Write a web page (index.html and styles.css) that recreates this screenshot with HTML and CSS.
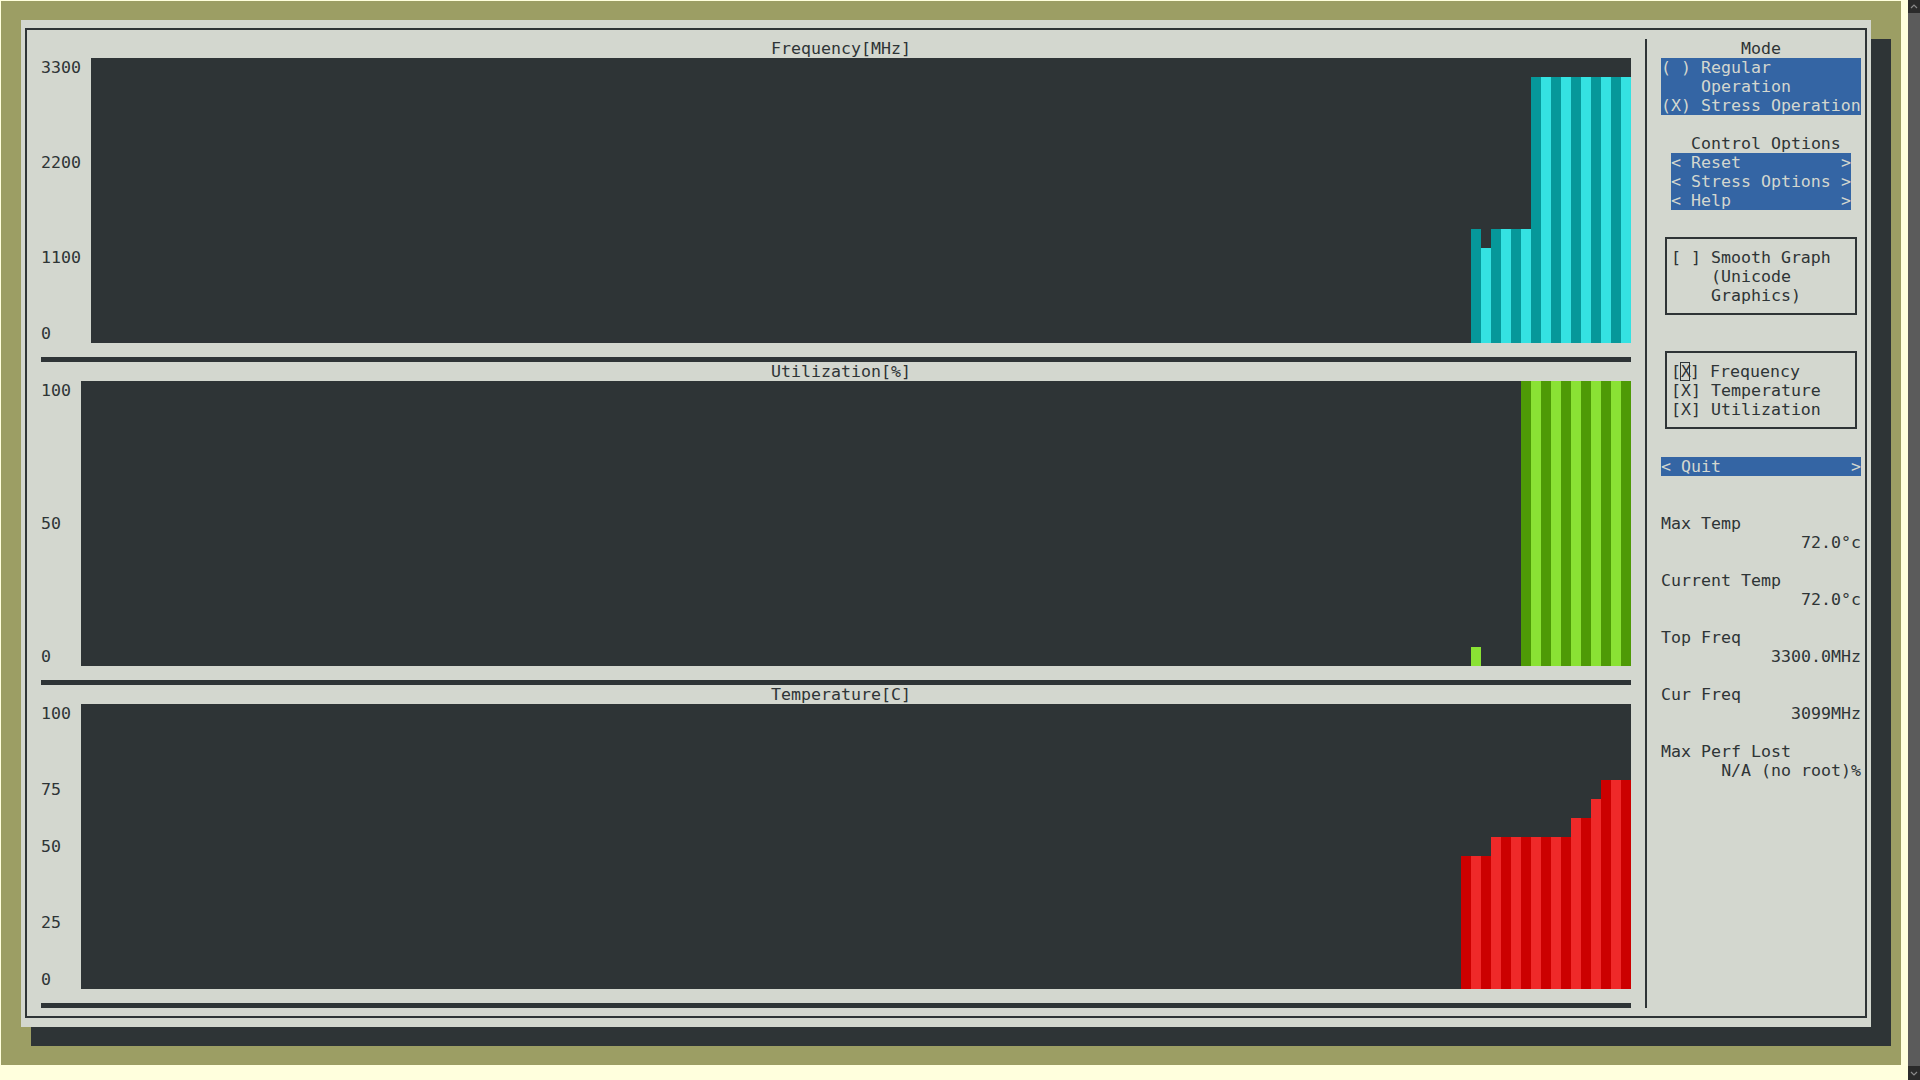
FILE: index.html
```html
<!DOCTYPE html>
<html lang="en">
<head>
<meta charset="utf-8">
<title>s-tui</title>
<link rel="stylesheet" href="styles.css">
</head>
<body>
<div class="term">
  <div class="window">
    <div class="frame">
      <div class="graphs">
        <section class="section">
          <div class="title">Frequency[MHz]</div>
          <div class="plotrow">
            <div class="axis w4">
              <span style="grid-row:1">3300</span>
              <span style="grid-row:6">2200</span>
              <span style="grid-row:11">1100</span>
              <span style="grid-row:15">0</span>
            </div>
            <div class="plot freq w154">
              <i class="bar" style="height:114px"></i><i class="bar" style="height:95px"></i><i class="bar" style="height:114px"></i><i class="bar" style="height:114px"></i><i class="bar" style="height:114px"></i><i class="bar" style="height:114px"></i><i class="bar" style="height:266px"></i><i class="bar" style="height:266px"></i><i class="bar" style="height:266px"></i><i class="bar" style="height:266px"></i><i class="bar" style="height:266px"></i><i class="bar" style="height:266px"></i><i class="bar" style="height:266px"></i><i class="bar" style="height:266px"></i><i class="bar" style="height:266px"></i><i class="bar" style="height:266px"></i>
            </div>
          </div>
          <div class="divider"></div>
        </section>
        <section class="section">
          <div class="title">Utilization[%]</div>
          <div class="plotrow">
            <div class="axis w3">
              <span style="grid-row:1">100</span>
              <span style="grid-row:8">50</span>
              <span style="grid-row:15">0</span>
            </div>
            <div class="plot util w155">
              <i class="bar" style="height:19px"></i><i class="bar" style="height:0"></i><i class="bar" style="height:0"></i><i class="bar" style="height:0"></i><i class="bar" style="height:0"></i><i class="bar" style="height:285px"></i><i class="bar" style="height:285px"></i><i class="bar" style="height:285px"></i><i class="bar" style="height:285px"></i><i class="bar" style="height:285px"></i><i class="bar" style="height:285px"></i><i class="bar" style="height:285px"></i><i class="bar" style="height:285px"></i><i class="bar" style="height:285px"></i><i class="bar" style="height:285px"></i><i class="bar" style="height:285px"></i>
            </div>
          </div>
          <div class="divider"></div>
        </section>
        <section class="section">
          <div class="title">Temperature[C]</div>
          <div class="plotrow">
            <div class="axis w3">
              <span style="grid-row:1">100</span>
              <span style="grid-row:5">75</span>
              <span style="grid-row:8">50</span>
              <span style="grid-row:12">25</span>
              <span style="grid-row:15">0</span>
            </div>
            <div class="plot temp w155">
              <i class="bar" style="height:133px"></i><i class="bar" style="height:133px"></i><i class="bar" style="height:133px"></i><i class="bar" style="height:152px"></i><i class="bar" style="height:152px"></i><i class="bar" style="height:152px"></i><i class="bar" style="height:152px"></i><i class="bar" style="height:152px"></i><i class="bar" style="height:152px"></i><i class="bar" style="height:152px"></i><i class="bar" style="height:152px"></i><i class="bar" style="height:171px"></i><i class="bar" style="height:171px"></i><i class="bar" style="height:190px"></i><i class="bar" style="height:209px"></i><i class="bar" style="height:209px"></i><i class="bar" style="height:209px"></i>
            </div>
          </div>
          <div class="divider"></div>
        </section>
      </div>

      <div class="vsep"></div>

      <aside class="side">
        <div class="row center">Mode</div>
        <div class="hl">
          <div class="row">( ) Regular</div>
          <div class="row">    Operation</div>
          <div class="row">(X) Stress Operation</div>
        </div>
        <div class="row"></div>
        <div class="row ctl-title">Control Options</div>
        <div class="hl buttons">
          <div class="row btn"><span>&lt; Reset</span><span>&gt;</span></div>
          <div class="row btn"><span>&lt; Stress Options</span><span>&gt;</span></div>
          <div class="row btn"><span>&lt; Help</span><span>&gt;</span></div>
        </div>
        <div class="row"></div>
        <div class="box">
          <div class="row">[ ] Smooth Graph</div>
          <div class="row">    (Unicode</div>
          <div class="row">    Graphics)</div>
        </div>
        <div class="row"></div>
        <div class="box">
          <div class="row">[<span class="cursor">X</span>] Frequency</div>
          <div class="row">[X] Temperature</div>
          <div class="row">[X] Utilization</div>
        </div>
        <div class="row"></div>
        <div class="hl">
          <div class="row btn"><span>&lt; Quit</span><span>&gt;</span></div>
        </div>
        <div class="row"></div>
        <div class="row"></div>
        <div class="stats">
          <div class="row">Max Temp</div>
          <div class="row val">72.0°c</div>
          <div class="row"></div>
          <div class="row">Current Temp</div>
          <div class="row val">72.0°c</div>
          <div class="row"></div>
          <div class="row">Top Freq</div>
          <div class="row val">3300.0MHz</div>
          <div class="row"></div>
          <div class="row">Cur Freq</div>
          <div class="row val">3099MHz</div>
          <div class="row"></div>
          <div class="row">Max Perf Lost</div>
          <div class="row val">N/A (no root)%</div>
        </div>
      </aside>
    </div>
  </div>
</div>
<div class="scrollbar">
  <div class="sb-btn"><svg width="12" height="13" viewBox="0 0 12 13"><path d="M3 8 L6 5 L9 8" fill="none" stroke="#8a8a8a" stroke-width="1.2"/></svg></div>
  <div class="sb-btn"><svg width="12" height="14" viewBox="0 0 12 14"><path d="M3 6 L6 9 L9 6" fill="none" stroke="#8a8a8a" stroke-width="1.2"/></svg></div>
</div>
</body>
</html>
```
FILE: styles.css
```css
html, body {
  margin: 0;
  padding: 0;
}
body {
  width: 1920px;
  height: 1080px;
  overflow: hidden;
  background: #ffffdd;
  display: flex;
  font-family: "DejaVu Sans Mono", "Liberation Mono", monospace;
  font-size: 16.6px;
  line-height: 19px;
  color: #2e3436;
}
.term {
  margin: 1px 0 0 1px;
  width: 1900px;
  height: 1064px;
  background: #9c9e64;
  padding: 19px 0 0 20px;
  box-sizing: border-box;
}
.window {
  width: 1850px;
  height: 1007px;
  background: #d3d7cf;
  box-shadow: 20px 19px 0 #2e3436, 10px 19px 0 #2e3436;
  padding: 8px 4px 9px 4px;
  box-sizing: border-box;
}
.frame {
  height: 100%;
  box-sizing: border-box;
  border: 2px solid #2e3436;
  padding: 9px 4px 8px 4px;
  display: flex;
}
.graphs {
  width: 1610px;
  display: flex;
  flex-direction: column;
}
.section {
  height: 323px;
  display: flex;
  flex-direction: column;
}
.title {
  height: 19px;
  padding-left: 10px;
  text-align: center;
  white-space: pre;
}
.plotrow {
  height: 285px;
  display: flex;
  padding-left: 10px;
}
.axis {
  display: grid;
  grid-template-rows: repeat(15, 19px);
  margin-right: 10px;
  white-space: pre;
}
.axis.w4 { width: 40px; }
.axis.w3 { width: 30px; }
.plot {
  height: 285px;
  background: #2e3436;
  display: flex;
  justify-content: flex-end;
  align-items: flex-end;
}
.plot.w154 { width: 1540px; }
.plot.w155 { width: 1550px; }
.bar {
  display: block;
  width: 10px;
  flex: none;
}
.plot.freq .bar:nth-child(odd) { background: #06989a; }
.plot.freq .bar:nth-child(even) { background: #34e2e2; }
.plot.util .bar:nth-child(odd) { background: #8ae234; }
.plot.util .bar:nth-child(even) { background: #4e9a06; }
.plot.temp .bar:nth-child(odd) { background: #cc0000; }
.plot.temp .bar:nth-child(even) { background: #ef2929; }
.divider {
  height: 19px;
  width: 1590px;
  margin-left: 10px;
  box-sizing: border-box;
  border-bottom: 5px solid #2e3436;
}
.vsep {
  width: 2px;
  margin: 0 4px;
  background: #2e3436;
  flex: none;
}
.side {
  width: 210px;
  padding-left: 10px;
  box-sizing: border-box;
  display: flex;
  flex-direction: column;
  flex: none;
}
.row {
  height: 19px;
  white-space: pre;
}
.center { text-align: center; }
.hl {
  background: #3465a4;
  color: #d3d7cf;
}
.ctl-title { padding-left: 30px; }
.buttons { margin: 0 10px; }
.btn {
  display: flex;
  justify-content: space-between;
}
.box {
  margin: 8px 4px 9px 4px;
  border: 2px solid #2e3436;
  padding: 9px 4px 8px 4px;
}
.cursor {
  display: inline-block;
  width: 10px;
  height: 19px;
  vertical-align: top;
  box-shadow: inset 0 0 0 1px #2e3436;
  margin-left: -1px;
  padding-left: 1px;
  box-sizing: content-box;
  width: 9px;
}
.stats .val { text-align: right; }
.scrollbar {
  margin-left: 7px;
  width: 12px;
  height: 1080px;
  background: #5b5b5b;
  display: flex;
  flex-direction: column;
  justify-content: space-between;
}
.sb-btn {
  background: #2b2b2b;
  height: 13px;
}
.sb-btn:last-child { height: 14px; }
.sb-btn svg { display: block; }
```
